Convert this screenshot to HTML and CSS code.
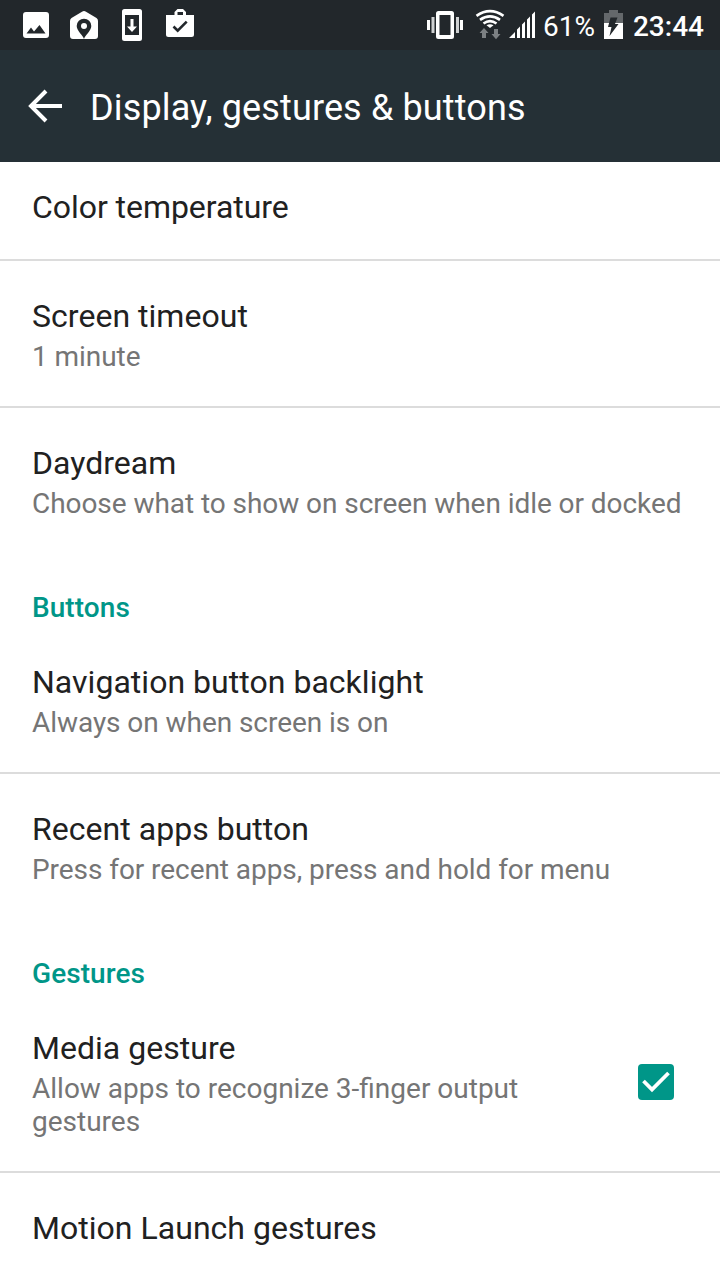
FILE: index.html
```html
<!DOCTYPE html>
<html lang="en">
<head>
<meta charset="utf-8">
<title>Display, gestures &amp; buttons</title>
<link rel="stylesheet" href="styles.css">
</head>
<body>
<header class="status">
<svg class="status-icons" width="720" height="50" viewBox="0 0 720 50" fill="#fff">
<path fill-rule="evenodd" d="M26 12h20q3 0 3 3v20q0 3-3 3H26q-3 0-3-3V15q0-3 3-3zM26.500 33.500H45.500L39.500 25 34 31.500 31 27.500z"/>
<path d="M84 11q1 0 2 .700L96.500 18Q98 19 98 21V36q0 3-3 3H73q-3 0-3-3V21q0-2 1.500-3L82 11.700q1-.700 2-.700z"/>
<path fill="#22272b" d="M84 39c-1-4-7.300-8-7.300-13a7.300 7.300 0 0 1 14.600 0c0 5-6.300 9-7.300 13z"/><circle cx="84" cy="26" r="3"/>
<path fill-rule="evenodd" d="M124.500 9h15q2.500 0 2.500 2.500v27q0 2.500-2.500 2.500h-15q-2.500 0-2.500-2.500v-27q0-2.500 2.500-2.500zM125 15v20h14V15zM130.500 19h3v7.500h3.500l-5 5.500-5-5.500h3.500z"/>
<path fill-rule="evenodd" d="M174.500 15v-3l3-3h5.500l3 3v3h8v19.500q0 2.500-2.500 2.500h-23q-2.500 0-2.500-2.500V15zM177.500 15h5.500v-3h-5.500z"/>
<path d="M173.500 26.500l4.200 4.200 9-9" fill="none" stroke="#22272b" stroke-width="2.600"/>
<path d="M427 20h3v10h-3zM460 20h3v10h-3z"/><path fill="#cfd1d2" d="M431.500 17h3v16h-3zM456 17h3v16h-3z"/>
<path fill-rule="evenodd" d="M438.500 11h13q2.500 0 2.500 2.500v23q0 2.500-2.500 2.500h-13q-2.500 0-2.500-2.500v-23q0-2.500 2.500-2.500zM439.500 15v20h11V15z"/>
<g fill="none" stroke="#fff" stroke-width="2.700"><path d="M476.500 15.800q13.500-9.200 27 0M480 19.800q10-7 20 0M483.500 23.500q6.500-4.600 13 0"/></g><path d="M486.500 25.200q3.500-1.800 7 0L490 28z"/>
<path fill="#7c8083" d="M484 28l4.500 5H486v5h-4v-5h-2.500zM498 29v5h2.500L496 39.300l-4.500-5.300h2.500v-5z"/>
<path d="M509 38l6-6v6zM517 38V29.500l3-3V38zM522 38V24.500l3-3V38zM527 38V19.500l3-3V38zM532 38V14.500l3-3V38z"/>
<path fill="#64686b" d="M604 13h5v-3h9v3h5v11h-19z"/><path d="M604 23h19v16h-19z"/>
<path fill="#22272b" d="M610.500 17.500h7l-2.500 6.500h3.500l-9 12 2-9h-3.500z"/>
</svg>
<div class="status-text"><span class="battery">61%</span><span class="clock">23:44</span></div>
</header>
<nav class="toolbar">
<svg width="34" height="34" viewBox="0 0 34 34" fill="none" stroke="#fff" stroke-width="4"><path d="M34 17H4M18 2L3 17l15 15"/></svg>
<h1>Display, gestures &amp; buttons</h1>
</nav>
<main>
<section class="row first"><h2>Color temperature</h2></section>
<section class="row line"><h2>Screen timeout</h2><p>1 minute</p></section>
<section class="row line"><h2>Daydream</h2><p>Choose what to show on screen when idle or docked</p></section>
<h3>Buttons</h3>
<section class="row"><h2>Navigation button backlight</h2><p>Always on when screen is on</p></section>
<section class="row line"><h2>Recent apps button</h2><p>Press for recent apps, press and hold for menu</p></section>
<h3>Gestures</h3>
<section class="row check"><div><h2>Media gesture</h2><p>Allow apps to recognize 3-finger output gestures</p></div>
<svg width="36" height="36" viewBox="0 0 36 36"><rect width="36" height="36" rx="4" fill="#009688"/><path d="M5.500 17l8.500 8.500L30.500 9" fill="none" stroke="#fff" stroke-width="3.800"/></svg></section>
<section class="row line"><h2>Motion Launch gestures</h2></section>
</main>
</body>
</html>
```
FILE: styles.css
```css
* { box-sizing: border-box; margin: 0; }
body { width: 720px; height: 1280px; overflow: hidden; background: #fff; font-family: Roboto, sans-serif; color: #212121; }
.status { height: 50px; background: #22272b; color: #fff; position: relative; }
.status-icons { position: absolute; left: 0; top: 0; }
.status-text { display: flex; justify-content: flex-end; padding: 10px 16px 0 0; font-size: 28px; line-height: 34px; }
.battery { margin-right: 38px; }
.clock { font-weight: 500; }
.toolbar { height: 112px; background: #253036; color: #fff; display: flex; align-items: center; padding-left: 28px; gap: 28px; }
h1 { font-size: 36px; font-weight: 400; line-height: 42px; padding-top: 4px; letter-spacing: 0.14px; }
.row { padding: 35px 32px 0; height: 146px; }
.line { border-top: 2px solid #dcdcdc; height: 147px; padding-top: 34px; }
.row.first { height: 97px; padding-top: 24px; }
.first h2 { letter-spacing: -0.05px; }
h2 { font-size: 32px; font-weight: 400; line-height: 42px; letter-spacing: 0.03px; }
p { font-size: 28px; line-height: 33px; color: #757575; padding-top: 3px; letter-spacing: -0.06px; }
h3 { font-size: 28px; line-height: 34px; font-weight: 500; color: #009688; padding: 38px 32px 0; height: 73px; letter-spacing: 0.06px; }
.row.check { display: flex; height: 179px; gap: 46px; padding-right: 46px; }
.check div { width: 560px; }
.check p { letter-spacing: 0; }
.check svg { margin-top: 37px; flex: none; }
```
